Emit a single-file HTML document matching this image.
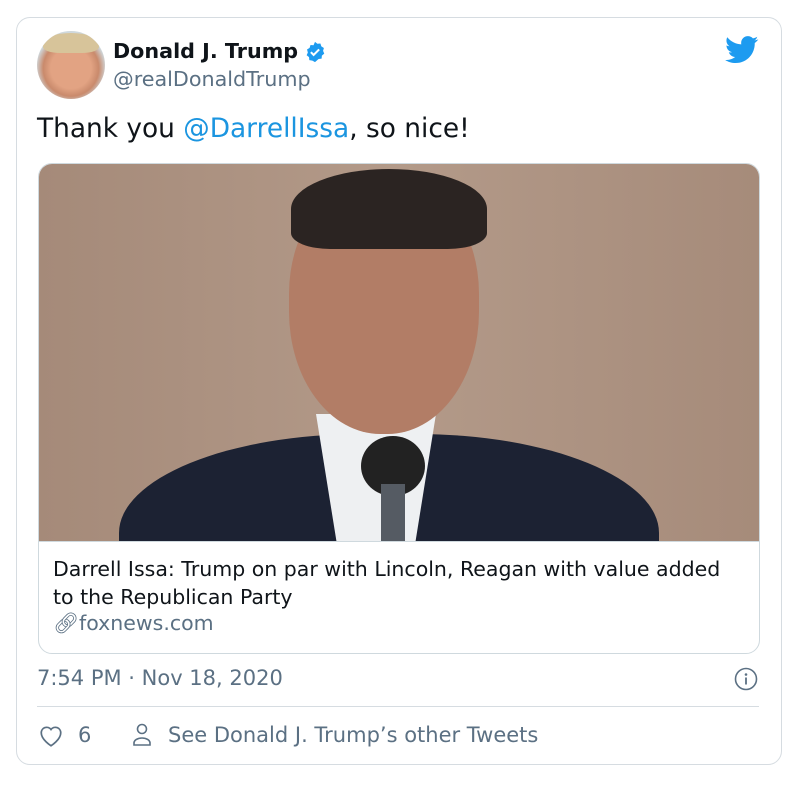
<!DOCTYPE html>
<html><head><style>
body{margin:0;width:799px;height:788px;background:#fff;font-family:"DejaVu Sans","Liberation Sans",sans-serif;position:relative;overflow:hidden}
.a{position:absolute;white-space:nowrap}
</style></head><body>
<div class="a" style="left:16px;top:17px;width:764px;height:746px;border:1px solid #d6dce1;border-radius:14px"></div>
<div class="a" style="left:37px;top:31px;width:68px;height:68px;border-radius:50%;background:radial-gradient(circle at 50% 55%,#e2a383 0 40%,#c98a6c 55%,#cfd8dc 70%);overflow:hidden">
<div style="position:absolute;left:6px;top:2px;width:56px;height:20px;border-radius:50% 50% 30% 30%;background:#d7c49a"></div></div>
<div class="a" style="left:113px;top:39px;font-size:20.7px;font-weight:bold;color:#0f1419">Donald J. Trump</div>
<svg class="a" style="left:304px;top:41px" width="22" height="22" viewBox="0 0 24 24"><path fill="#1d9bf0" d="M12 1l2.6 2 3.3-.3 1 3.1 2.8 1.8-.9 3.2 1.3 3-2.6 2.1-.3 3.3-3.3.5L12 23l-2.9-1.6-3.3-.5-.3-3.3L2.9 15.5l1.3-3-.9-3.2 2.8-1.8 1-3.1 3.3.3z"/><path d="M7.5 12.2l3 3 6-6" stroke="#fff" stroke-width="2.3" fill="none"/></svg>
<div class="a" style="left:113px;top:67px;font-size:20.7px;color:#5b7083">@realDonaldTrump</div>
<svg class="a" style="left:725px;top:36px" width="34" height="28" viewBox="0 0 24 20"><path fill="#1d9bf0" d="M23.6 2.4c-.9.4-1.8.6-2.8.8 1-.6 1.800-1.5 2.1-2.7-1 .6-2 1-3.1 1.2C18.9.7 17.6.1 16.2.1c-2.7 0-4.8 2.2-4.8 4.8 0 .4 0 .8.1 1.1C7.4 5.8 3.9 3.9 1.5.9 1.1 1.6.9 2.5.9 3.3c0 1.7.9 3.200 2.2 4-.8 0-1.5-.2-2.2-.6v.1c0 2.3 1.7 4.3 3.9 4.7-.4.1-.8.2-1.300.2-.3 0-.6 0-.9-.1.6 1.9 2.4 3.3 4.5 3.4-1.7 1.3-3.7 2.1-6 2.1H0c2.1 1.4 4.7 2.2 7.4 2.2 8.9 0 13.7-7.4 13.7-13.700v-.6c1-.7 1.8-1.5 2.5-2.5z"/></svg>
<div class="a" style="left:37px;top:113px;font-size:26.4px;color:#0f1419">Thank you <span style="color:#1b95e0">@DarrellIssa</span>, so nice!</div>
<div class="a" style="left:38px;top:163px;width:720px;height:489px;border:1px solid #cfd9de;border-radius:14px;overflow:hidden">
 <div style="position:absolute;left:0;top:0;width:720px;height:377px;background:linear-gradient(90deg,#a58a79,#b39a89 50%,#a68b7a);overflow:hidden">
  <div style="position:absolute;left:80px;top:270px;width:540px;height:220px;border-radius:45% 45% 0 0;background:#1c2233"></div>
  <div style="position:absolute;left:262px;top:250px;width:150px;height:140px;background:#eef0f2;clip-path:polygon(10% 0,90% 0,75% 100%,25% 100%)"></div>
  <div style="position:absolute;left:250px;top:15px;width:190px;height:255px;border-radius:45% 45% 48% 48%;background:#b27d66"></div>
  <div style="position:absolute;left:252px;top:5px;width:196px;height:80px;border-radius:50% 50% 20% 20%;background:#2b2422"></div>
  <div style="position:absolute;left:322px;top:272px;width:64px;height:60px;border-radius:50%;background:#222"></div>
  <div style="position:absolute;left:342px;top:320px;width:24px;height:60px;background:#555b63"></div>
 </div>
 <div style="position:absolute;left:0;top:377px;width:720px;height:1px;background:#cfd9de"></div>
 <div style="position:absolute;left:14px;top:391px;font-size:20.5px;line-height:28px;color:#0f1419;width:690px;white-space:normal">Darrell Issa: Trump on par with Lincoln, Reagan with value added to the Republican Party</div>
 <div style="position:absolute;left:14px;top:447px;font-size:20.5px;color:#5b7083">🔗︎foxnews.com</div>
</div>
<div class="a" style="left:37px;top:666px;font-size:21px;color:#5b7083">7:54 PM · Nov 18, 2020</div>
<svg class="a" style="left:734px;top:667px" width="24" height="24" viewBox="0 0 24 24"><circle cx="12" cy="12" r="10.5" fill="none" stroke="#5b7083" stroke-width="1.6"/><circle cx="12" cy="7.5" r="1.3" fill="#5b7083"/><path d="M12 10.5v7" stroke="#5b7083" stroke-width="1.8"/></svg>
<div class="a" style="left:37px;top:706px;width:722px;height:1px;background:#d6dce1"></div>
<svg class="a" style="left:38px;top:724px" width="26" height="24" viewBox="0 0 24 22"><path d="M12 20s-9-5.5-9-12a5 5 0 0 1 9-3 5 5 0 0 1 9 3c0 6.5-9 12-9 12z" fill="none" stroke="#5b7083" stroke-width="1.6"/></svg>
<div class="a" style="left:78px;top:723px;font-size:21px;color:#5b7083">6</div>
<svg class="a" style="left:131px;top:722px" width="22" height="26" viewBox="0 0 22 26"><circle cx="11" cy="7" r="4.5" fill="none" stroke="#5b7083" stroke-width="1.6"/><path d="M3 23v-2a8 5 0 0 1 16 0v2z" fill="none" stroke="#5b7083" stroke-width="1.6"/></svg>
<div class="a" style="left:168px;top:723px;font-size:21px;color:#5b7083">See Donald J. Trump’s other Tweets</div>
</body></html>
